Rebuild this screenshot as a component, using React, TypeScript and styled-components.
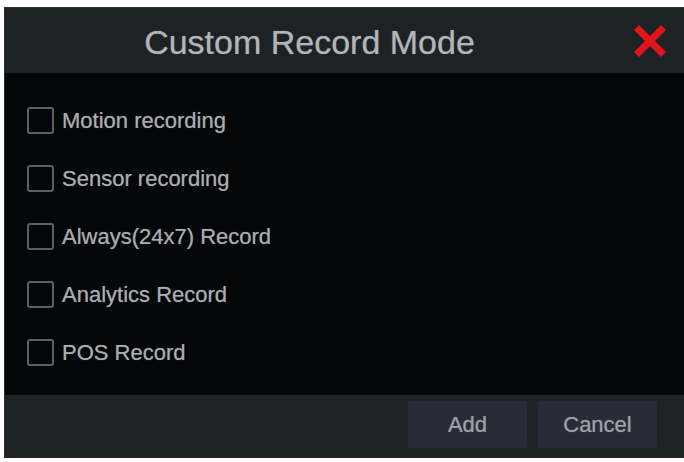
import React from "react";
import styled, { createGlobalStyle } from "styled-components";

const GlobalStyle = createGlobalStyle`
  html, body {
    margin: 0;
    padding: 0;
    background: #ffffff;
  }
  body {
    font-family: "Liberation Sans", Arial, sans-serif;
  }
`;

const Dialog = styled.div`
  margin: 7px 0 0 4px;
  width: 680px;
  height: 451px;
  display: flex;
  flex-direction: column;
  background: #040608;
  border-left: 1px solid #2a2e31;
  box-sizing: border-box;
`;

const Header = styled.div`
  height: 66px;
  flex: none;
  display: flex;
  align-items: center;
  padding-right: 3px;
  background: #1d2224;
  border-top: 1px solid #2b3033;
  box-sizing: border-box;
`;

const Title = styled.div`
  flex: 1;
  text-align: center;
  font-size: 34px;
  color: #b1b5b7;
  padding: 4px 0 0 3px;
  text-shadow: 0 0 1px rgba(177, 181, 183, 0.6);
`;

const CloseButton = styled.button`
  width: 70px;
  height: 100%;
  border: none;
  background: transparent;
  padding: 0 0 0 8px;
  display: flex;
  align-items: center;
  justify-content: center;
  cursor: pointer;
`;

const Body = styled.div`
  flex: 1;
  display: flex;
  flex-direction: column;
  gap: 31px;
  padding: 34px 0 0 22px;
`;

const Row = styled.label`
  display: flex;
  align-items: center;
  gap: 8px;
  height: 27px;
  font-size: 22px;
  color: #a9adb0;
  text-shadow: 0 0 1px rgba(169, 173, 176, 0.6);
  cursor: pointer;
`;

const Box = styled.span<{ $checked: boolean }>`
  width: 27px;
  height: 27px;
  box-sizing: border-box;
  border: 2px solid #5c6063;
  border-radius: 3px;
  background: ${(p) => (p.$checked ? "#3a6ea5" : "transparent")};
`;

const Footer = styled.div`
  height: 63px;
  flex: none;
  display: flex;
  justify-content: flex-end;
  align-items: center;
  gap: 11px;
  padding: 0 27px 4px 0;
  background: #1e2326;
  box-sizing: border-box;
`;

const Button = styled.button`
  width: 119px;
  height: 47px;
  border: none;
  border-radius: 2px;
  background: #292c37;
  color: #9ea2a7;
  font-family: "Liberation Sans", Arial, sans-serif;
  font-size: 22px;
  text-shadow: 0 0 1px rgba(158, 162, 167, 0.6);
  cursor: pointer;
`;

const modes = [
  "Motion recording",
  "Sensor recording",
  "Always(24x7) Record",
  "Analytics Record",
  "POS Record",
];

export default function App() {
  const [checked, setChecked] = React.useState<boolean[]>(modes.map(() => false));

  const toggle = (i: number) =>
    setChecked((prev) => prev.map((v, j) => (j === i ? !v : v)));

  return (
    <>
      <GlobalStyle />
      <Dialog>
        <Header>
          <Title>Custom Record Mode</Title>
          <CloseButton aria-label="Close">
            <svg width="32" height="32" viewBox="0 0 32 32">
              <path
                d="M5 5 L27 27 M27 5 L5 27"
                stroke="#e3131a"
                strokeWidth="7"
                strokeLinecap="square"
                fill="none"
              />
            </svg>
          </CloseButton>
        </Header>
        <Body>
          {modes.map((m, i) => (
            <Row key={m} onClick={() => toggle(i)}>
              <Box $checked={checked[i]} />
              {m}
            </Row>
          ))}
        </Body>
        <Footer>
          <Button>Add</Button>
          <Button>Cancel</Button>
        </Footer>
      </Dialog>
    </>
  );
}
